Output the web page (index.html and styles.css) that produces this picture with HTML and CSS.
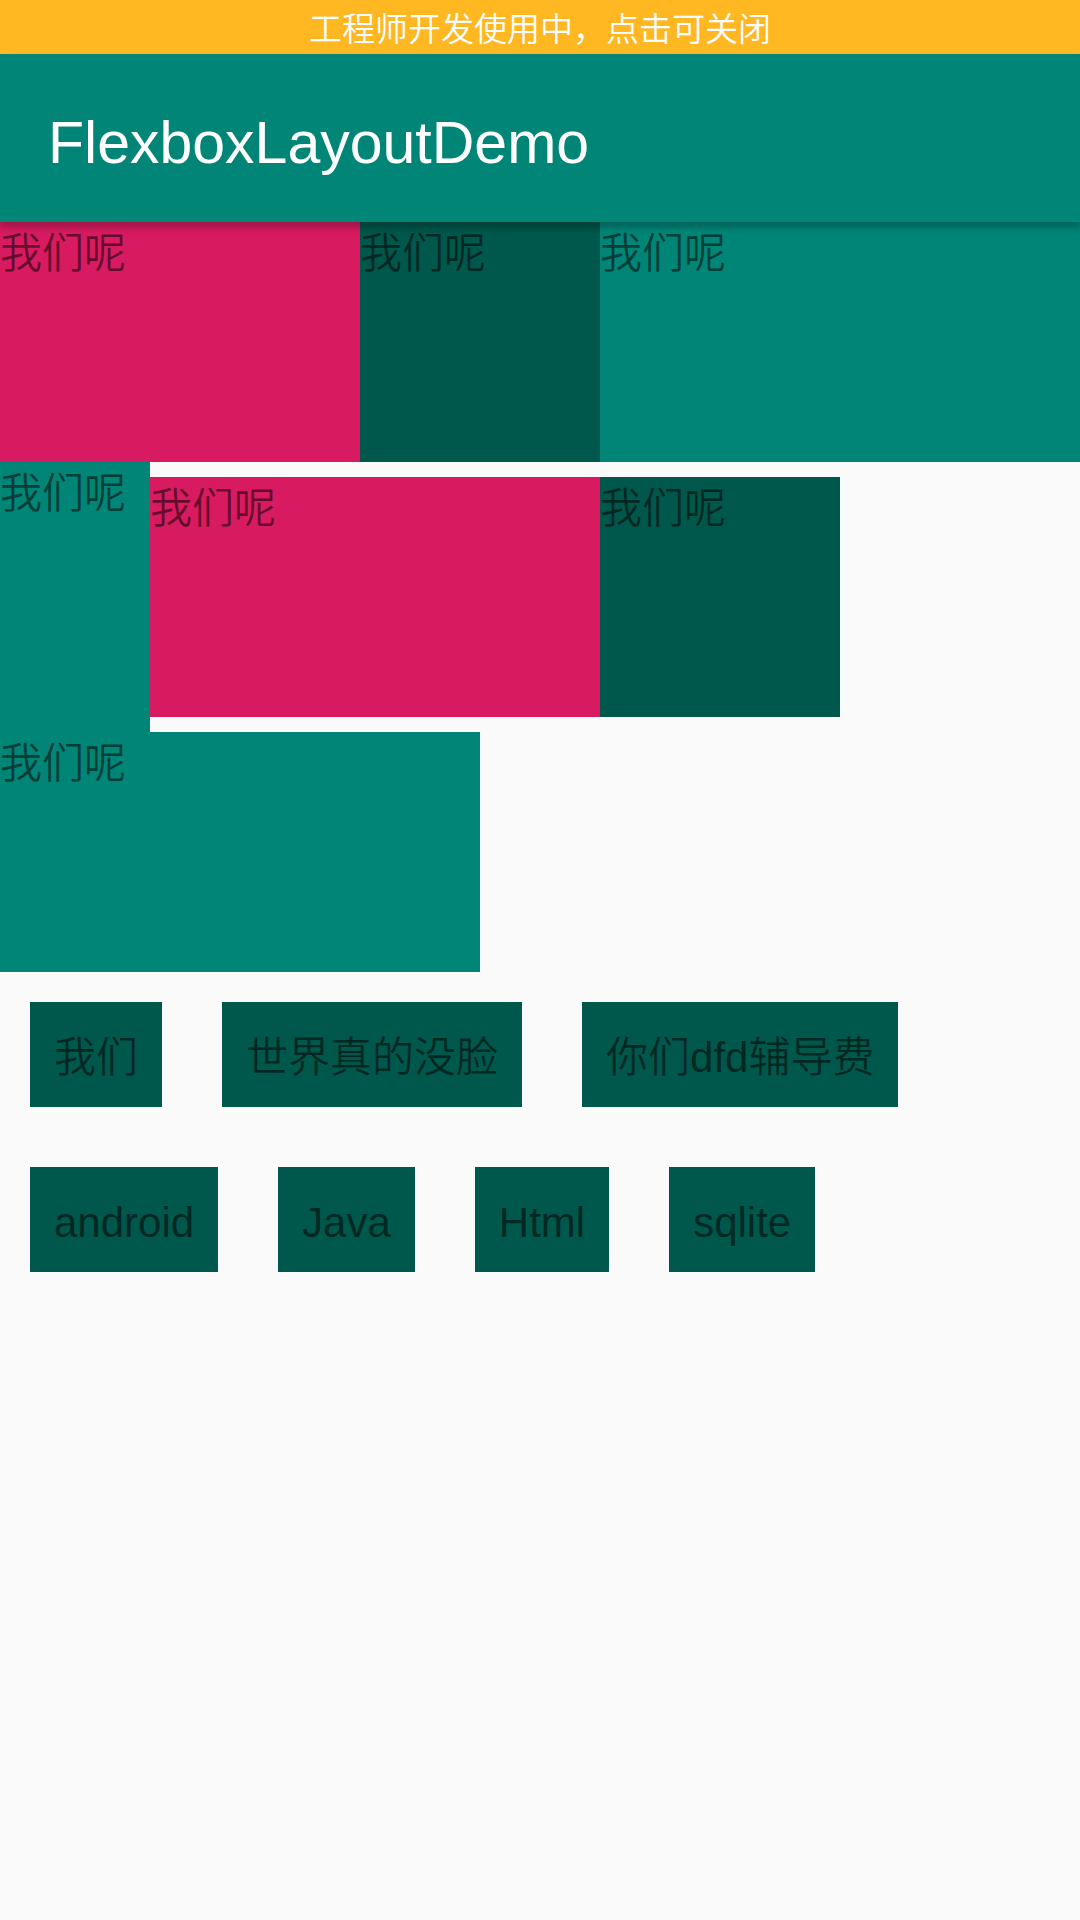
FILE: index.html
```html
<!DOCTYPE html>
<html lang="zh-CN">
<head>
  <meta charset="utf-8">
  <meta name="viewport" content="width=device-width, initial-scale=1">
  <title>FlexboxLayoutDemo</title>
  <link rel="stylesheet" href="styles.css">
</head>
<body>
  <button class="notice" type="button">工程师开发使用中，点击可关闭</button>
  <header class="app-bar">
    <h1 class="app-title">FlexboxLayoutDemo</h1>
  </header>
  <main>
    <section class="boxes">
      <div class="box accent medium">我们呢</div>
      <div class="box dark small">我们呢</div>
      <div class="box primary large">我们呢</div>
      <div class="box primary narrow">我们呢</div>
      <div class="box accent wide inset">我们呢</div>
      <div class="box dark small inset">我们呢</div>
      <div class="box primary large">我们呢</div>
    </section>
    <ul class="tags">
      <li class="tag">我们</li>
      <li class="tag">世界真的没脸</li>
      <li class="tag">你们dfd辅导费</li>
      <li class="tag">android</li>
      <li class="tag">Java</li>
      <li class="tag">Html</li>
      <li class="tag">sqlite</li>
    </ul>
  </main>
</body>
</html>
```
FILE: styles.css
```css
:root {
  --primary: #008577;
  --primary-dark: #00574b;
  --accent: #d81b60;
  --text: rgba(0, 0, 0, 0.54);
}

* {
  box-sizing: border-box;
}

body {
  margin: 0;
  background: #fafafa;
  color: var(--text);
  font-family: "Liberation Sans", "Noto Sans CJK SC", sans-serif;
  font-size: 42px;
  font-weight: 350;
  line-height: 57px;
}

.notice {
  display: block;
  width: 100%;
  padding: 6px 0 0;
  border: 0;
  background: #ffb822;
  color: #fff;
  font: inherit;
  font-size: 33px;
  line-height: 48px;
  text-align: center;
}

.app-bar {
  position: relative;
  display: flex;
  align-items: center;
  min-height: 168px;
  padding: 9px 48px 0;
  background: var(--primary);
  box-shadow: 0 6px 6px rgba(0, 0, 0, 0.24);
}

.app-title {
  margin: 0;
  color: #fff;
  font-size: 59px;
  font-weight: 300;
  line-height: 72px;
}

.boxes {
  display: flex;
  flex-wrap: wrap;
}

.box {
  min-height: 240px;
  padding-top: 3px;
}

.narrow { width: 150px; }
.small { width: 240px; }
.medium { width: 360px; }
.wide { width: 450px; }
.large { width: 480px; }

.inset {
  margin: 15px 0;
}

.primary { background: var(--primary); }
.dark { background: var(--primary-dark); }
.accent { background: var(--accent); }

.tags {
  display: flex;
  flex-wrap: wrap;
  gap: 60px;
  margin: 0;
  padding: 30px;
  list-style: none;
}

.tag {
  padding: 27px 24px 21px;
  background: var(--primary-dark);
}
```
